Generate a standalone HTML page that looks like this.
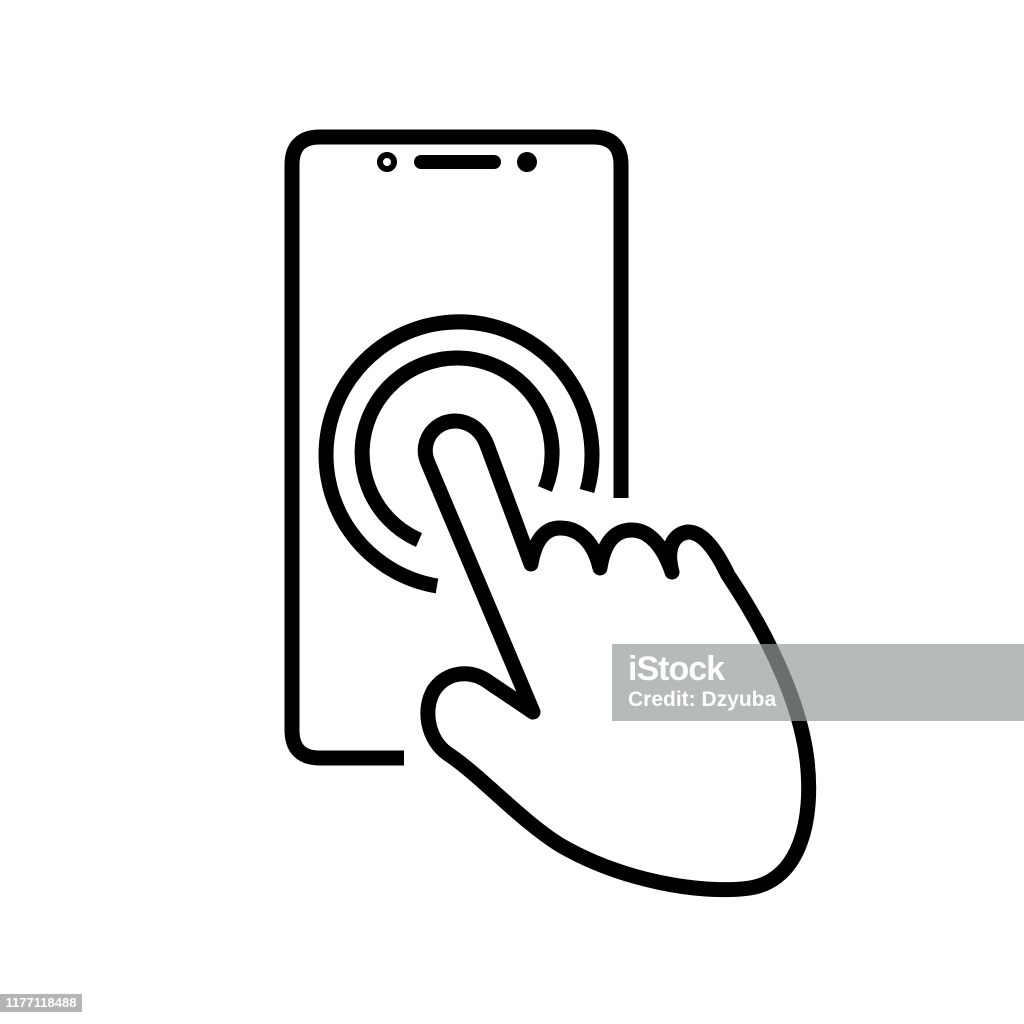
<!DOCTYPE html>
<html><head><style>
html,body{margin:0;padding:0;background:#fff;width:1024px;height:1024px;overflow:hidden;position:relative;font-family:"Liberation Sans",sans-serif}
svg{position:absolute;left:0;top:0}
.wm{position:absolute;left:612px;top:644px;width:412px;height:77px;background:rgba(150,156,156,0.7)}
.wm .a{position:absolute;left:16px;top:6px;color:#fff;font-weight:bold;font-size:34px;letter-spacing:-1px}
.wm .b{position:absolute;left:16px;top:44px;color:#fff;font-weight:bold;font-size:21px}
.id{position:absolute;left:0;top:994px;width:82px;height:18px;background:#b4b6b6;color:#fff;font-size:13px;font-weight:bold;line-height:18px;text-align:center}
</style></head><body>
<svg width="1024" height="1024" viewBox="0 0 1024 1024" fill="none" stroke="#000" stroke-width="15" stroke-linejoin="round" stroke-linecap="butt">
<path d="M404,758 L320,758 Q292,758 292,730 L292,165 Q292,137 320,137 L593,137 Q621,137 621,165 L621,498"/>
<circle cx="387" cy="162" r="7" stroke-width="6"/>
<circle cx="527" cy="162" r="10" fill="#000" stroke="none"/>
<line x1="421" y1="162" x2="494" y2="162" stroke-width="14" stroke-linecap="round"/>
<path d="M437,586 A133,133 0 1 1 587,491"/>
<path d="M419,540 A95,95 0 1 1 545,489"/>
<path d="M531,564 L487,445 C478,422 458,418 444,423 C428,430 421,447 428,463 L533,712 L490,683 C470,668 446,672 434,690 C422,710 428,740 448,754 C480,775 520,820 560,845 C620,880 700,895 750,888 C800,880 814,820 807,760 C800,700 765,630 728,575 C715,548 702,532 688,532 C672,534 666,550 672,572 C664,548 650,530 632,530 C615,530 604,542 600,568 C594,543 580,528 560,528 C545,528 535,540 531,564 Z"/>
</svg>
<div class="wm"><div class="a">iStock</div><div class="b">Credit: Dzyuba</div></div>
<div class="id">1177118488</div>
</body></html>
